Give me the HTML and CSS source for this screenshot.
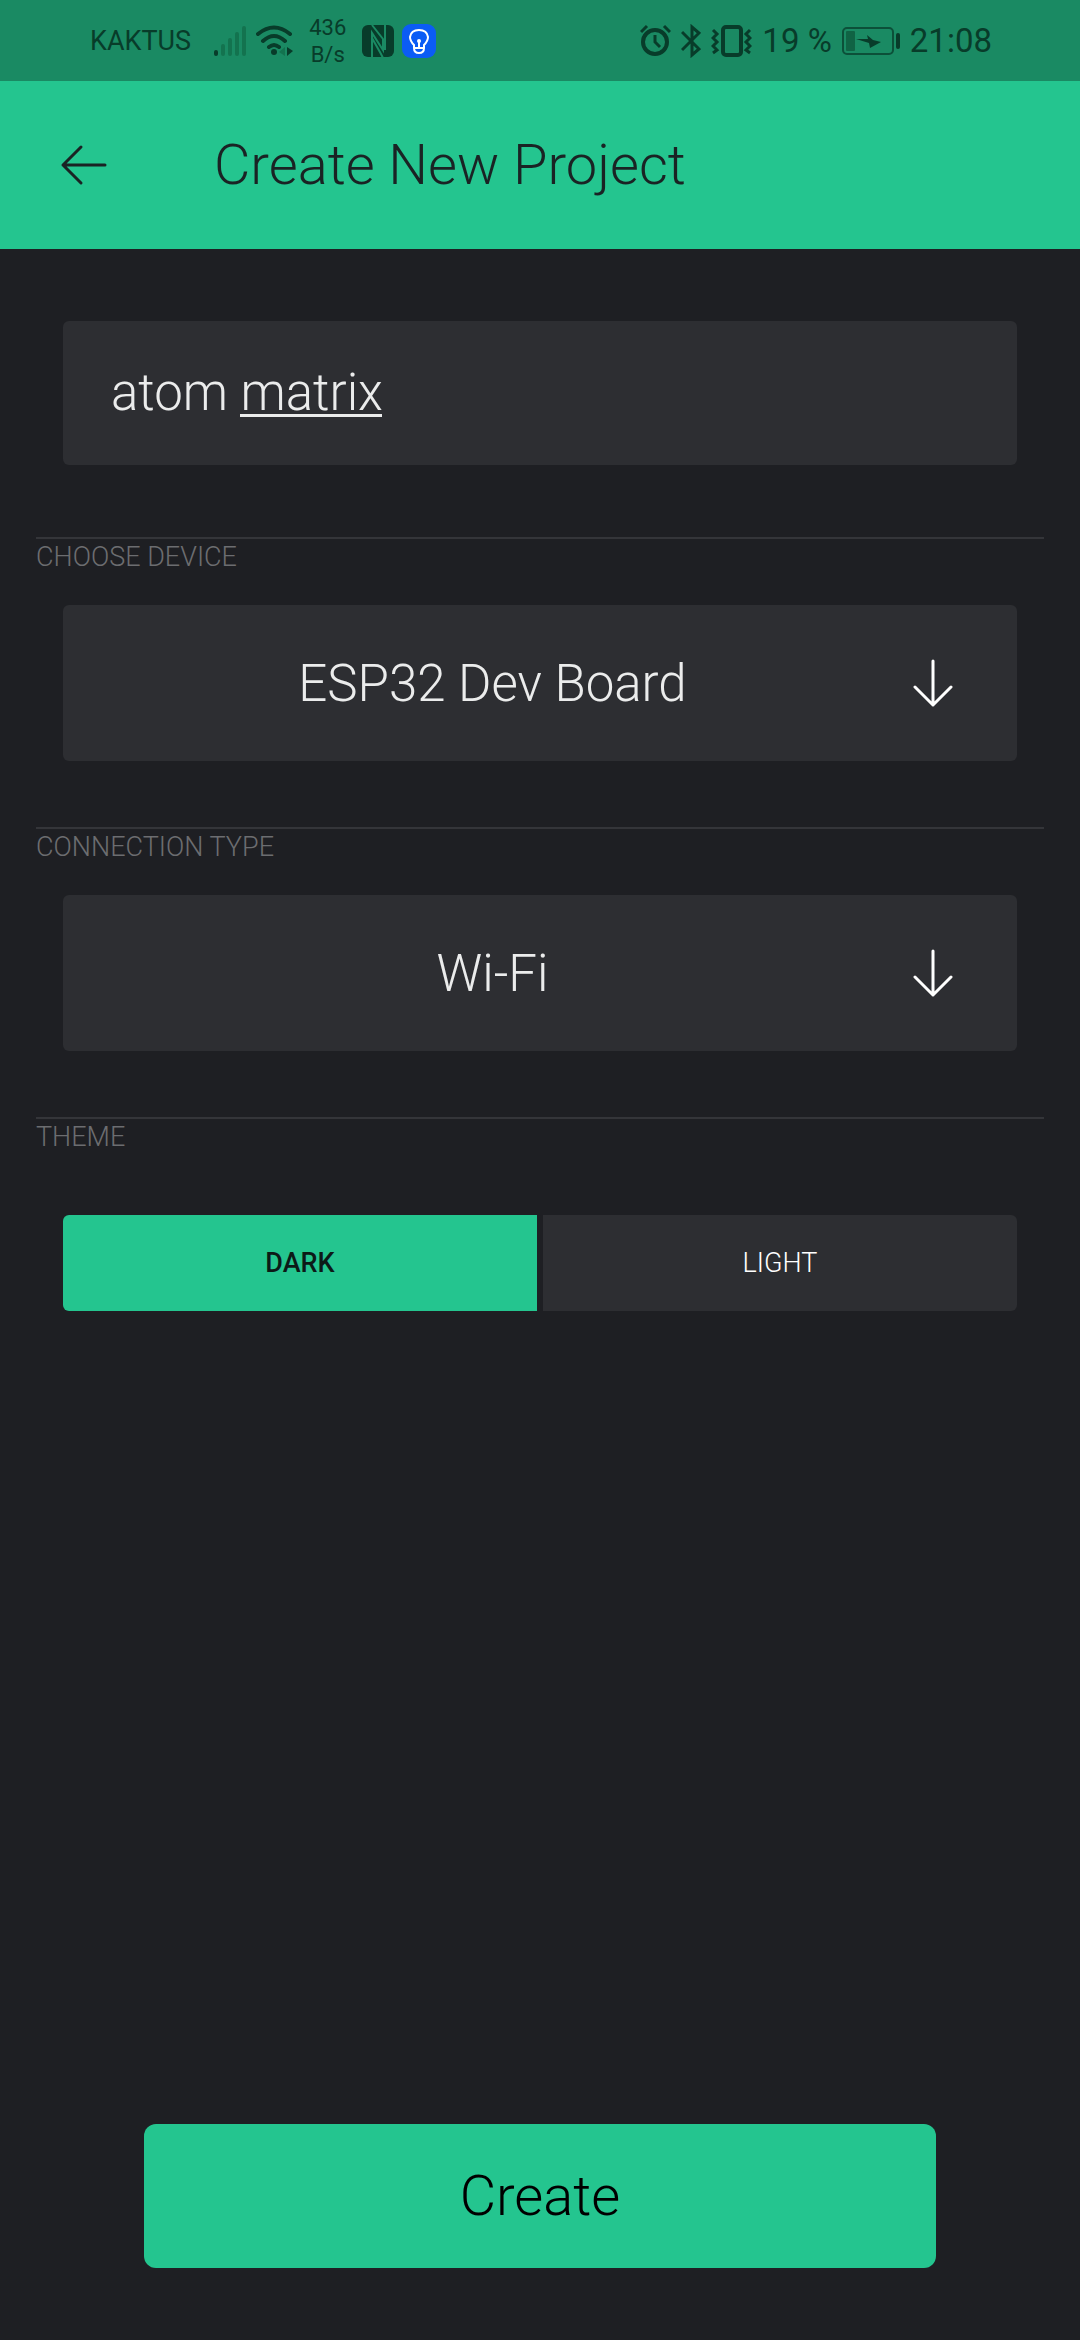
FILE: index.html
```html
<!DOCTYPE html>
<html lang="en">
<head>
<meta charset="utf-8">
<meta name="viewport" content="width=device-width, initial-scale=1">
<title>Create New Project</title>
<link rel="stylesheet" href="styles.css">
</head>
<body>
<div class="status">
  <div class="status-group">
    <span class="carrier">KAKTUS</span>
    <svg class="icon" width="35" height="34" viewBox="0 0 35 34" stroke-width="4" stroke-linecap="round" fill="none">
      <path d="M3 28v2" stroke="#083c2a"/>
      <path d="M10 22v8M17 16v14M24 10v20M31 4v26" stroke="#13734f"/>
    </svg>
    <svg class="icon" width="37" height="34" viewBox="0 0 37 34" stroke="#083c2a" stroke-width="4" stroke-linecap="round" fill="none">
      <path d="M2 10Q18 -3 34 10M7 17Q18 7 29 17M13 23Q18 19 23 23"/>
      <circle cx="18" cy="28" r="3" fill="#083c2a" stroke="none"/>
      <path d="M29 23v9l-6-4z" fill="#13734f" stroke="none"/>
      <path d="M31 23v9l6-5z" fill="#083c2a" stroke="none"/>
    </svg>
    <span class="speed">436<br>B/s</span>
    <svg class="icon" width="32" height="34" viewBox="0 0 32 34">
      <rect y="1" width="32" height="32" rx="6" fill="#083c2a"/>
      <path d="M10 34V9l11 17V15L10 1M23 0v26M10 14l9 16 2 4" fill="none" stroke="#1a8a63" stroke-width="2"/>
    </svg>
    <svg class="icon" width="34" height="34" viewBox="0 0 34 34" fill="none" stroke="#fff" stroke-width="2">
      <rect width="34" height="34" rx="9" fill="#0b5cf5" stroke="none"/>
      <path d="M12 24v-3q-4-4-4-8 1-7 9-7t9 7q0 4-4 8v3q0 5-5 5t-5-5zM12 24h10M17 17v7"/>
      <circle cx="17" cy="17" r="2" fill="#fff" stroke="none"/>
    </svg>
  </div>
  <div class="status-group status-group-end">
    <svg class="icon" width="31" height="34" viewBox="0 0 31 34" fill="none" stroke="#083c2a" stroke-width="4">
      <circle cx="15" cy="18" r="12"/>
      <path d="M15 11v7l5 5" stroke-width="3"/>
      <path d="M1 8l6-6M30 8l-6-6" stroke-width="3"/>
    </svg>
    <svg class="icon" width="20" height="34" viewBox="0 0 20 34" fill="none" stroke="#083c2a" stroke-width="3">
      <path d="M1 8l17 17-7 6V3l7 6L1 26"/>
    </svg>
    <svg class="icon" width="41" height="34" viewBox="0 0 41 34" fill="none" stroke="#083c2a">
      <rect x="12" y="3" width="18" height="28" rx="3" stroke-width="4"/>
      <path d="M2 6l4 4-4 4 4 4-4 4 4 4-4 3M39 6l-4 4 4 4-4 4 4 4-4 4 4 3" stroke-width="3"/>
    </svg>
    <span class="clock">19 %</span>
    <svg class="icon" width="58" height="34" viewBox="0 0 58 34">
      <rect x="1" y="4" width="50" height="26" rx="4" fill="none" stroke="#0c5039" stroke-width="2"/>
      <rect x="4" y="7" width="9" height="20" rx="1" fill="#106344"/>
      <path d="M25 11l6 5 8 2-11 6-1-5-13-4 12 0z" fill="#083c2a"/>
      <rect x="54" y="9" width="4" height="16" rx="2" fill="#083c2a"/>
    </svg>
    <span class="clock">21:08</span>
  </div>
</div>

<header class="app-bar">
  <button class="back" type="button" aria-label="Back">
    <svg width="48" height="42" viewBox="0 0 48 42" fill="none" stroke="#1a2324" stroke-width="3" stroke-linecap="round" stroke-linejoin="round">
      <path d="M45 21H3M21 3L3 21l18 18"/>
    </svg>
  </button>
  <h1 class="title">Create New Project</h1>
</header>

<form class="form">
  <div class="name">
    <input class="box name-input" type="text" aria-label="Project name" value="atom matrix" spellcheck="false">
    <span class="composing"></span>
  </div>

  <section class="section">
    <label class="caption" for="device">CHOOSE DEVICE</label>
    <div class="picker">
      <select class="box picker-select" id="device"><option>ESP32 Dev Board</option></select>
      <svg class="picker-arrow" width="40" height="48" viewBox="0 0 40 48" fill="none" stroke="#fff" stroke-width="3" stroke-linecap="round" stroke-linejoin="round">
        <path d="M20 2v44M2 28l18 18 18-18"/>
      </svg>
    </div>
  </section>

  <section class="section">
    <label class="caption" for="connection">CONNECTION TYPE</label>
    <div class="picker">
      <select class="box picker-select" id="connection"><option>Wi-Fi</option></select>
      <svg class="picker-arrow" width="40" height="48" viewBox="0 0 40 48" fill="none" stroke="#fff" stroke-width="3" stroke-linecap="round" stroke-linejoin="round">
        <path d="M20 2v44M2 28l18 18 18-18"/>
      </svg>
    </div>
  </section>

  <section class="section">
    <h2 class="caption">THEME</h2>
    <div class="themes">
      <label class="theme"><input class="theme-radio" type="radio" name="theme" checked>DARK</label>
      <label class="theme"><input class="theme-radio" type="radio" name="theme">LIGHT</label>
    </div>
  </section>

  <button class="create" type="submit">Create</button>
</form>
</body>
</html>
```
FILE: styles.css
```css
* {
  box-sizing: border-box;
}

body {
  margin: 0;
  min-height: 100vh;
  display: flex;
  flex-direction: column;
  background: #1e1f23;
  color: #ebecec;
  font-family: Roboto, "Noto Sans", sans-serif;
  font-weight: 300;
}

button,
input,
select {
  font: inherit;
  color: inherit;
  border: 0;
  margin: 0;
}

.status {
  display: flex;
  justify-content: space-between;
  align-items: center;
  height: 81px;
  padding: 0 88px 0 90px;
  background: #1a8a63;
  color: #083c2a;
  font-weight: 400;
}

.status-group {
  display: flex;
  align-items: center;
  gap: 8px;
}

.status-group-end {
  gap: 10px;
}

.icon {
  flex: none;
}

.carrier {
  margin-right: 14px;
  font-size: 27px;
}

.speed {
  margin: 0 8px;
  font-size: 22px;
  line-height: 27px;
  text-align: center;
}

.clock {
  font-size: 33px;
}

.app-bar {
  display: flex;
  align-items: center;
  height: 168px;
  padding: 0 60px;
  gap: 106px;
  background: #24c58f;
  color: #1a2324;
}

.back {
  display: flex;
  padding: 0;
  background: none;
}

.title {
  margin: 0;
  font-size: 56px;
  font-weight: 300;
}

.form {
  flex: 1;
  display: flex;
  flex-direction: column;
  padding: 72px 36px;
}

.box {
  width: 100%;
  border-radius: 6px;
  background: #2d2e32;
  font-size: 51px;
}

.name {
  position: relative;
  margin: 0 27px 72px;
}

.name-input {
  display: block;
  height: 144px;
  padding: 0 48px 2px;
}

/* Marks the word the keyboard is still composing. */
.composing {
  position: absolute;
  left: 177px;
  top: 93px;
  width: 142px;
  height: 3px;
  background: #ebecec;
}

.section {
  border-top: 2px solid #343539;
  margin-bottom: 66px;
}

.caption {
  display: block;
  margin: 0;
  padding: 0 0 30px;
  font-size: 27px;
  line-height: 36px;
  font-weight: 300;
  color: #6c6d70;
}

.picker {
  position: relative;
  margin: 0 27px;
}

.picker-select {
  display: block;
  height: 156px;
  padding: 0 95px 0 0;
  appearance: none;
  text-align: center;
  text-align-last: center;
}

.picker-arrow {
  position: absolute;
  right: 64px;
  top: 54px;
  pointer-events: none;
}

.themes {
  display: flex;
  gap: 6px;
  margin: 30px 27px 0;
}

.theme {
  flex: 1;
  display: flex;
  align-items: center;
  justify-content: center;
  height: 96px;
  background: #2d2e32;
  color: #fff;
  font-size: 27px;
}

.theme:first-child {
  border-radius: 6px 0 0 6px;
}

.theme:last-child {
  border-radius: 0 6px 6px 0;
}

.theme:has(:checked) {
  background: #24c58f;
  color: #0c1a17;
  font-weight: 500;
}

.theme-radio {
  position: absolute;
  appearance: none;
}

.create {
  align-self: center;
  width: calc(100% - 216px);
  height: 144px;
  margin-top: auto;
  border-radius: 12px;
  background: #24c58f;
  color: #000;
  font-size: 56px;
}
```
